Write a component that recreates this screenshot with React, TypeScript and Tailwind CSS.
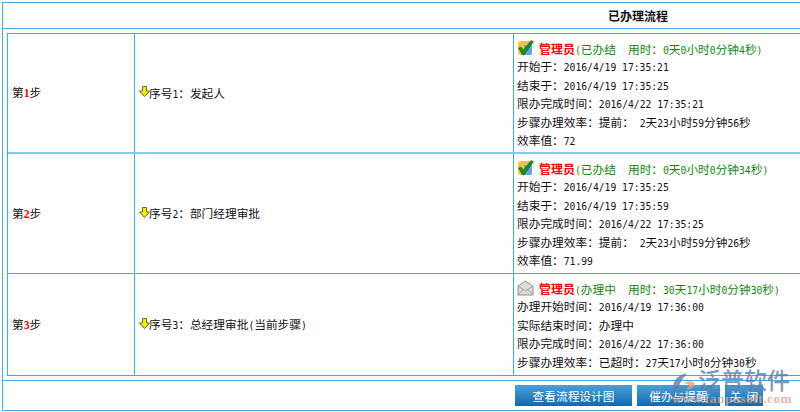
const cjk = '"Noto Sans CJK SC", "Liberation Sans", sans-serif';

// SimSun-like digits are about 6px wide, so ascii runs get a mono face
function Mixed({ text }: { text: string }) {
  return (
    <>
      {text.split(/([\x20-\x7e]+)/).map((part, i) =>
        /^[\x20-\x7e]+$/.test(part) ? (
          <span key={i} className="font-['DejaVu_Sans_Mono',monospace] text-[9.7px] whitespace-pre">
            {part}
          </span>
        ) : (
          <span key={i}>{part}</span>
        )
      )}
    </>
  );
}

function ArrowDown() {
  return (
    <svg width="11" height="11" viewBox="0 0 11 11" className="shrink-0 -mt-[3px] -mr-[1px]">
      <path d="M3.5 0.5h4v4.5h3l-5 5.5-5-5.5h3z" fill="#f4f000" stroke="#6b6b10" strokeWidth="1" />
    </svg>
  );
}

function DoneIcon() {
  return (
    <svg width="17" height="16" viewBox="0 0 17 16" className="shrink-0 -mt-[3px]">
      <rect x="1" y="1" width="13" height="14" rx="3" fill="#f2c33c" />
      <rect x="7" y="5" width="8" height="10" rx="1" fill="#5ea6dc" />
      <path d="M1.5 8l2.5-1 2.5 3L14 0.5l2.5 1L7 15H5.5z" fill="#1d8a1d" stroke="#0d5f0d" strokeWidth="0.5" />
    </svg>
  );
}

function MailIcon() {
  return (
    <svg width="17" height="16" viewBox="0 0 17 16" className="shrink-0 -mt-[3px]">
      <path d="M1 6l7.5-5L16 6v9H1z" fill="#dcdcdc" stroke="#8f8f8f" />
      <path d="M1 6l7.5 5L16 6M1 15l5.5-6M16 15l-5.5-6" fill="none" stroke="#a0a0a0" />
    </svg>
  );
}

type Step = {
  no: string;
  name: string;
  status: string;
  used: string;
  done: boolean;
  lines: string[];
  height: string;
};

const steps: Step[] = [
  {
    no: '1',
    name: '序号1：发起人',
    status: '(已办结',
    used: '用时：0天0小时0分钟4秒)',
    done: true,
    height: 'h-[120px] border-b-2 border-b-[#7fcdec]',
    lines: [
      '开始于：2016/4/19 17:35:21',
      '结束于：2016/4/19 17:35:25',
      '限办完成时间：2016/4/22 17:35:21',
      '步骤办理效率：提前： 2天23小时59分钟56秒',
      '效率值：72',
    ],
  },
  {
    no: '2',
    name: '序号2：部门经理审批',
    status: '(已办结',
    used: '用时：0天0小时0分钟34秒)',
    done: true,
    height: 'h-[120px] border-b border-b-[#35b0e4]',
    lines: [
      '开始于：2016/4/19 17:35:25',
      '结束于：2016/4/19 17:35:59',
      '限办完成时间：2016/4/22 17:35:25',
      '步骤办理效率：提前： 2天23小时59分钟26秒',
      '效率值：71.99',
    ],
  },
  {
    no: '3',
    name: '序号3：总经理审批(当前步骤)',
    status: '(办理中',
    used: '用时：30天17小时0分钟30秒)',
    done: false,
    height: 'h-[102px] border-b border-b-[#35b0e4]',
    lines: [
      '办理开始时间：2016/4/19 17:36:00',
      '实际结束时间：办理中',
      '限办完成时间：2016/4/22 17:36:00',
      '步骤办理效率：已超时：27天17小时0分钟30秒',
    ],
  },
];

function Button({ label, width }: { label: string; width: string }) {
  return (
    <div
      className={`${width} h-[21px] flex items-center justify-center text-white whitespace-pre bg-gradient-to-b from-[#4a9fd8] to-[#1269ad]`}
    >
      {label}
    </div>
  );
}

export default function App() {
  return (
    <div
      className="relative w-[800px] h-[412px] overflow-hidden bg-white text-[11.7px] text-[#111] pt-[2px] pl-[2px]"
      style={{ fontFamily: cjk }}
    >
      <div className="w-[820px] h-[409px] border border-r-0 border-[#35b0e4] flex flex-col">
        {/* title */}
        <div className="h-[26px] shrink-0 border-b border-[#35b0e4] flex items-center pl-[605px] text-[12px] font-bold">已办理流程</div>

        {/* steps */}
        <div className="pt-[4px] pl-[4px]">
          <div className="border border-r-0 border-b-0 border-[#35b0e4] flex flex-col">
            {steps.map((s) => (
              <div key={s.no} className={`${s.height} flex`}>
                <div className="w-[127px] border-r border-[#35b0e4] flex items-center pl-[4px]">
                  <span>
                    第<span className="text-[#f00] font-bold font-['Liberation_Serif',serif]">{s.no}</span>步
                  </span>
                </div>
                <div className="w-[379px] border-r border-[#35b0e4] flex items-center pl-[4px]">
                  <ArrowDown />
                  <span>
                    <Mixed text={s.name} />
                  </span>
                </div>
                <div className="flex-1 pl-[3px] pt-[5px]">
                  <div className="flex items-center h-[18px] pt-[2px]">
                    {s.done ? <DoneIcon /> : <MailIcon />}
                    <span className="ml-[5px] text-[12px] text-[#f00] font-bold">管理员</span>
                    <span className="text-[#0a8a0a]">
                      <Mixed text={s.status} />
                    </span>
                    <span className="ml-[12px] text-[#0a8a0a]">
                      <Mixed text={s.used} />
                    </span>
                  </div>
                  {s.lines.map((line) => (
                    <div key={line} className="h-[18.6px] leading-[18.6px] whitespace-nowrap">
                      <Mixed text={line} />
                    </div>
                  ))}
                </div>
              </div>
            ))}
          </div>
        </div>

        {/* buttons */}
        <div className="mt-[4px] border-t border-[#35b0e4] flex gap-[5px] pl-[512px] pt-[4px]">
          <Button label="查看流程设计图" width="w-[117px]" />
          <Button label="催办与提醒" width="w-[83px]" />
          <Button label="关  闭" width="w-[38px]" />
        </div>
      </div>

      {/* watermark */}
      <svg width="27" height="27" viewBox="0 0 30 34" className="absolute left-[671px] top-[372px] opacity-80">
        <path d="M18 2C8 3 1 10 1 18c0 8 6 13 13 13-6-3-8-8-6-13 2-6 6-11 10-16z" fill="#5f7ea8" />
        <path d="M14 14c5-3 10-3 14 0-1 6-5 9-11 8 3-2 4-4 3-6-2-1-4-1-6-2z" fill="#e8a27c" />
      </svg>
      <div className="absolute left-[698px] top-[365px] text-[23px] leading-[28px] font-medium text-[#5f7ea8] opacity-80 whitespace-nowrap">
        泛普软件
      </div>
      <div className="absolute left-[672px] top-[389px] text-[13px] font-bold text-[#d9a78e] opacity-80 font-['Liberation_Serif',serif] whitespace-nowrap tracking-[0.6px]">
        www.fanpusoft.com
      </div>
    </div>
  );
}
